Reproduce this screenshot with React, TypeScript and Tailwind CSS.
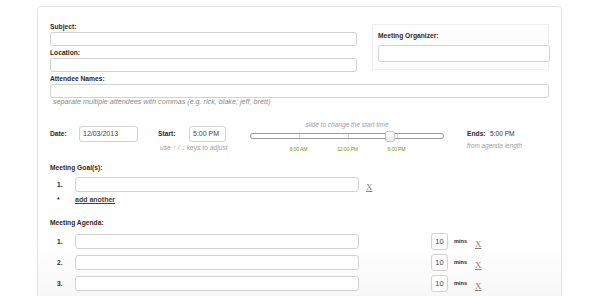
const font = { fontFamily: '"Liberation Sans", Arial, sans-serif' };

const label = "text-[6.7px] font-bold text-[#33261a] leading-[10px] whitespace-nowrap";
const field = "border border-[#d2d2d2] rounded-[3px] bg-white";
const hint = "italic text-[#8a8a8a] leading-[8px] whitespace-nowrap";

function RemoveX() {
  return (
    <span className="text-[9px] text-[#8c7f70] underline leading-none [font-family:'Liberation_Serif',serif]">
      X
    </span>
  );
}

function AgendaRow({ n, first }: { n: number; first?: boolean }) {
  return (
    <div className={`flex items-center h-[17px] ${first ? "mt-[5px]" : "mt-[4px]"}`}>
      <span className={`${label} w-[18px] pl-[7px] box-content`}>{n}.</span>
      <div className={`${field} w-[284px] h-[15px]`} />
      <div className={`${field} ml-[72px] w-[17px] h-[17px] flex items-center justify-center text-[7.5px] text-[#444]`}>
        10
      </div>
      <span className="ml-[6px] text-[5.6px] font-bold text-[#33261a] w-[13px]">mins</span>
      <span className="ml-[8px]">
        <RemoveX />
      </span>
    </div>
  );
}

export default function App() {
  return (
    <div className="w-[600px] h-[296px] bg-white overflow-hidden" style={font}>
      <div className="ml-[37px] mt-[6px] w-[525px] h-[300px] border border-[#e3e3e3] rounded-t-[4px] px-[12px] pt-[15px] bg-gradient-to-b from-white from-[80%] to-[#f6f6f6]">
        {/* top: subject / location + organizer */}
        <div className="flex items-start">
          <div className="w-[307px]">
            <div className={label}>Subject:</div>
            <div className={`${field} h-[14px]`} />
            <div className={`${label} mt-[2px]`}>Location:</div>
            <div className={`${field} h-[14px]`} />
          </div>
          <div className="ml-[15px] mt-[2px] w-[177px] h-[46px] border border-[#efefef] bg-[#fdfdfd] pl-[5px] pt-[6px]">
            <div className={label}>Meeting Organizer:</div>
            <div className={`${field} mt-[4px] w-[172px] h-[17px]`} />
          </div>
        </div>
        <div className={`${label} mt-[2px]`}>Attendee Names:</div>
        <div className={`${field} h-[14px]`} />
        <div className={`${hint} pl-[3px] text-[7.2px]`}>
          separate multiple attendees with commas (e.g. rick, blake; jeff, brett)
        </div>

        {/* date / time row */}
        <div className="mt-[15px] h-[32px] flex items-start">
          <div className="w-[108px] mt-[5px] flex items-center h-[16px]">
            <span className={`${label} w-[29px]`}>Date:</span>
            <div className={`${field} w-[59px] h-[16px] flex items-center pl-[3px] text-[7px] text-[#444]`}>
              12/03/2013
            </div>
          </div>
          <div className="w-[92px] mt-[5px]">
            <div className="flex items-center h-[16px]">
              <span className={`${label} w-[31px]`}>Start:</span>
              <div className={`${field} w-[37px] h-[16px] flex items-center pl-[3px] text-[7px] text-[#444] whitespace-nowrap`}>
                5:00 PM
              </div>
            </div>
            <div className={`${hint} mt-[2px] pl-[2px] text-[6.7px] text-[#a0a0a0]`}>
              use ↑ / ↓ keys to adjust
            </div>
          </div>
          <div className="w-[194px]">
            <div className={`${hint} text-center text-[6.5px] text-[#a0a0a0]`}>
              slide to change the start time
            </div>
            <div className="relative mt-[4px] h-[6px] rounded-full border border-[#9a9a9a] bg-white">
              <div className="absolute left-[48px] top-0 h-full w-px bg-[#d8d8d8]" />
              <div className="absolute left-[97px] top-0 h-full w-px bg-[#d8d8d8]" />
              <div className="absolute left-[146px] top-0 h-full w-px bg-[#d8d8d8]" />
              <div className="absolute left-[134px] top-[-3px] w-[10px] h-[11px] rounded-[2px] border border-[#c8c8c8] bg-gradient-to-b from-white to-[#e9e9e9]" />
            </div>
            <div className="mt-[6px] flex text-[5.2px] leading-[8px] text-[#6f9a2c] tracking-[-0.2px]">
              <span className="w-[24px]" />
              <span className="w-[49px] text-center">6:00 AM</span>
              <span className="w-[49px] text-center">12:00 PM</span>
              <span className="w-[49px] text-center">6:00 PM</span>
            </div>
          </div>
          <div className="ml-[23px] mt-[8px]">
            <div className="flex items-center">
              <span className={`${label} w-[23px]`}>Ends:</span>
              <span className="text-[6.6px] leading-[10px] text-[#333]">5:00 PM</span>
            </div>
            <div className={`${hint} mt-[3px] text-[6.4px] text-[#a0a0a0]`}>
              from agenda length
            </div>
          </div>
        </div>

        {/* goals */}
        <div className={`${label} mt-[10px]`}>Meeting Goal(s):</div>
        <div className="mt-[4px] flex items-center h-[15px]">
          <span className={`${label} w-[18px] pl-[7px] box-content`}>1.</span>
          <div className={`${field} w-[284px] h-[15px]`} />
          <span className="ml-[7px]">
            <RemoveX />
          </span>
        </div>
        <div className="mt-[3px] flex items-center h-[10px]">
          <span className={`${label} w-[18px] pl-[7px] box-content`}>*</span>
          <span className="text-[7px] font-bold text-[#4a3b2c] underline">add another</span>
        </div>

        {/* agenda */}
        <div className={`${label} mt-[13px]`}>Meeting Agenda:</div>
        <AgendaRow n={1} first />
        <AgendaRow n={2} />
        <AgendaRow n={3} />
      </div>
    </div>
  );
}
